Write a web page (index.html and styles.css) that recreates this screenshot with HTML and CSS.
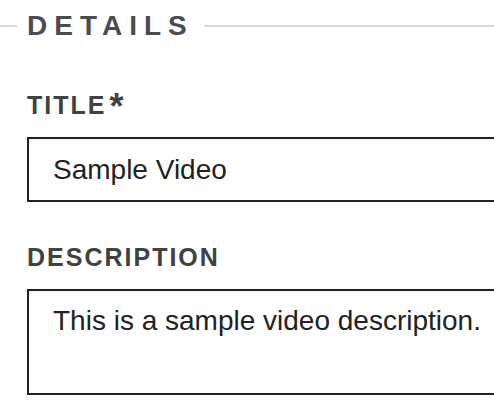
FILE: index.html
```html
<!DOCTYPE html>
<html lang="en">
<head>
<meta charset="utf-8">
<title>Details</title>
<link rel="stylesheet" href="styles.css">
</head>
<body>
<form class="form">
  <div class="section-title"><span class="section-text">DETAILS</span></div>
  <div class="field">
    <label class="label" for="title">TITLE<span class="req">*</span></label>
    <input class="input" id="title" type="text" value="Sample Video">
  </div>
  <div class="field">
    <label class="label" for="desc">DESCRIPTION</label>
    <textarea class="textarea" id="desc">This is a sample video description.</textarea>
  </div>
</form>
</body>
</html>
```
FILE: styles.css
```css
html, body {
  margin: 0;
  padding: 0;
  background: #ffffff;
  overflow: hidden;
}
body {
  font-family: "Liberation Sans", Arial, sans-serif;
}
.form {
  width: 494px;
  padding-top: 10px;
}
.section-title {
  display: flex;
  align-items: center;
  gap: 10px;
  height: 32px;
}
.section-title::before,
.section-title::after {
  content: "";
  height: 2px;
  background: #d6d8dc;
}
.section-title::before {
  width: 17px;
}
.section-title::after {
  flex: 1;
}
.section-text {
  font-size: 28px;
  line-height: 32px;
  font-weight: 700;
  letter-spacing: 7px;
  color: #4b4c51;
}
.field {
  display: flex;
  flex-direction: column;
  align-items: flex-start;
  padding-left: 27px;
  margin-top: 49px;
}
.field + .field {
  margin-top: 41px;
}
.label {
  display: flex;
  align-items: flex-start;
  font-size: 25px;
  line-height: 28px;
  font-weight: 700;
  letter-spacing: 2px;
  color: #414141;
  margin-bottom: 18px;
}
.req {
  font-size: 36px;
  line-height: 32px;
  margin-bottom: -4px;
  margin-left: 3px;
  letter-spacing: 0;
}
.input,
.textarea {
  box-sizing: border-box;
  width: 520px;
  margin: 0;
  border: 2px solid #222222;
  border-radius: 0;
  background: #ffffff;
  box-shadow: inset 0 2px 2px rgba(0, 0, 0, 0.05);
  font-family: "Liberation Sans", Arial, sans-serif;
  font-size: 28px;
  color: #222222;
  outline: none;
}
.input {
  height: 65px;
  padding: 0 24px;
}
.textarea {
  height: 106px;
  padding: 14px 24px;
  line-height: 32px;
  resize: none;
  overflow: hidden;
  display: block;
}
```
